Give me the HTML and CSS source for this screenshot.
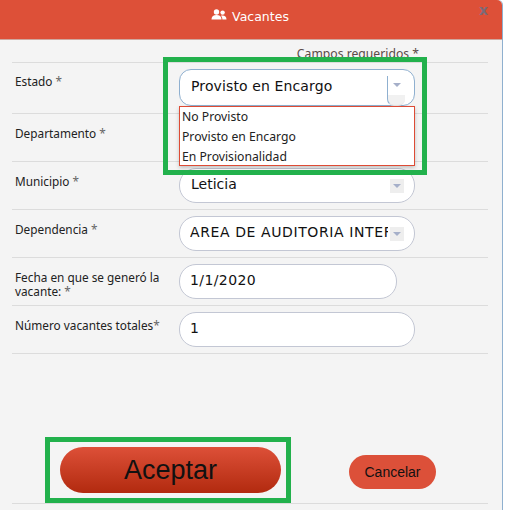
FILE: index.html
```html
<!DOCTYPE html>
<html lang="es">
<head>
<meta charset="utf-8">
<title>Vacantes</title>
<link rel="stylesheet" href="styles.css">
</head>
<body>
<div class="modal">
  <header class="head">
    <svg class="users" viewBox="0 0 16 12" width="16" height="12" aria-hidden="true">
      <circle cx="5.5" cy="3" r="2.7" fill="#fff"/>
      <circle cx="11.6" cy="3.6" r="2.2" fill="#fff"/>
      <path d="M0.5 10.5c0-3 2-4.4 5-4.4s5 1.4 5 4.4z" fill="#fff"/>
      <path d="M11.4 10.5h4.1c0-2.600-1.500-4-4-4-.6 0-1.100.1-1.600.2 1 .9 1.500 2.200 1.500 3.800z" fill="#fff"/>
    </svg>
    <span class="title">Vacantes</span>
    <span class="close">x</span>
  </header>
  <main class="body">
    <p class="req">Campos requeridos *</p>
    <div class="row row-first">
      <label class="lab">Estado <i>*</i></label>
      <div class="field focus"><span class="val val-main">Provisto en Encargo</span><span class="arrow arrow-open"></span></div>
    </div>
    <div class="row">
      <label class="lab">Departamento <i>*</i></label>
      <div class="field"><span class="arrow"></span></div>
    </div>
    <div class="row">
      <label class="lab">Municipio <i>*</i></label>
      <div class="field"><span class="val">Leticia</span><span class="arrow"></span></div>
    </div>
    <div class="row">
      <label class="lab">Dependencia <i>*</i></label>
      <div class="field"><span class="val clip">AREA DE AUDITORIA INTERNA</span><span class="arrow"></span></div>
    </div>
    <div class="row">
      <label class="lab two">Fecha en que se generó la vacante: <i>*</i></label>
      <div class="field short"><span class="val val-in">1/1/2020</span></div>
    </div>
    <div class="row">
      <label class="lab">Número vacantes totales<i>*</i></label>
      <div class="field"><span class="val val-in">1</span></div>
    </div>
    <footer class="foot">
      <button class="btn-ok" type="button">Aceptar</button>
      <button class="btn-cancel" type="button">Cancelar</button>
    </footer>
  </main>
  <ul class="drop">
    <li>No Provisto</li>
    <li>Provisto en Encargo</li>
    <li>En Provisionalidad</li>
  </ul>
  <div class="mark mark-select"></div>
  <div class="mark mark-ok"></div>
</div>
</body>
</html>
```
FILE: styles.css
```css
* { box-sizing: border-box; }
html, body { margin: 0; padding: 0; background: #fff; }
body { width: 505px; height: 510px; overflow: hidden; font-family: "DejaVu Sans", Verdana, sans-serif; }
.modal { position: relative; width: 503px; height: 510px; background: #f4f4f4; border-right: 1px solid #8fb0cf; border-top-right-radius: 5px; }
.head { height: 40px; background: #dd5038; color: #fff; display: flex; align-items: center; justify-content: center; gap: 5px; padding: 0 2px 6px 0; border-bottom: 1px solid #cfa89e; border-top-right-radius: 5px; position: relative; }
.users { margin-top: -4px; }
.title { font-size: 12.5px; line-height: 16px; }
.close { position: absolute; right: 14px; top: 2px; font-size: 14px; font-weight: bold; line-height: 16px; color: #7c6a78; }
.body { padding: 0 14px 0 12px; }
.req { margin: 0; height: 22px; padding: 6px 69px 0 0; text-align: right; font-family: "Noto Sans", sans-serif; font-size: 12.2px; line-height: 16px; color: #5a4a48; }
.row { height: 48px; display: grid; grid-template-columns: 167px 1fr; align-items: start; padding-top: 6px; border-bottom: 1px solid #dcdcdc; }
.row-first { height: 52px; border-top: 1px solid #dcdcdc; padding-top: 6px; }
.lab { font-family: "Noto Sans", sans-serif; font-size: 11.8px; line-height: 14px; color: #222; padding: 6px 0 0 3px; }
.row-first .lab { padding-top: 5px; }
.lab i { font-style: normal; color: #666; }
.row .two { padding-top: 6px; line-height: 14px; }
.field { width: 236px; height: 35px; background: #fff; border: 1px solid #c3c7d4; border-radius: 17px; display: flex; align-items: center; padding: 0 0 3px 11px; position: relative; }
.short { width: 218px; }
.focus { height: 37px; border-color: #8fb0d0; border-radius: 12px; }
.val { font-size: 14px; color: #111; white-space: nowrap; }
.val-main { letter-spacing: .12px; }
.val-in { margin-left: -1px; letter-spacing: .4px; }
.clip { width: 198px; overflow: hidden; margin-left: -1px; letter-spacing: .6px; }
.arrow { position: absolute; right: 10px; top: 10px; width: 14px; height: 14px; background: #eeeeee; }
.arrow::after { content: ""; position: absolute; left: 3px; top: 5px; border: 4px solid transparent; border-top: 4px solid #a5afc9; border-bottom: 0; }
.arrow-open { right: 9px; top: 6px; width: 18px; height: 30px; background: linear-gradient(#fff 0 66%, #f1f1f1 66%); border-left: 1px solid #8fb0d0; border-bottom: 1px solid #e4e4e4; border-radius: 0 0 7px 7px; }
.arrow-open::after { left: 5px; top: 7px; }
.foot { margin-top: 84px; height: 66px; border-bottom: 1px solid #dcdcdc; display: flex; align-items: flex-start; padding: 9px 0 0 48px; }
.btn-ok { width: 221px; height: 46px; border: 0; border-radius: 23px; background: linear-gradient(#dd5038, #b22a0f); font-family: "Liberation Sans", Arial, sans-serif; font-size: 27px; color: #111; padding: 0; }
.btn-cancel { width: 87px; height: 34px; margin: 8px 0 0 68px; border: 0; border-radius: 17px; background: #dc5039; font-family: "Liberation Sans", Arial, sans-serif; font-size: 14px; color: #111; padding: 0; }
.drop { position: absolute; left: 179px; top: 106px; width: 236px; height: 60px; margin: 0; padding: 0 0 0 2px; list-style: none; background: #fff; border: 1px solid #dd4b35; box-shadow: 0 2px 4px rgba(0,0,0,.2); font-family: "Noto Sans", sans-serif; font-size: 12.2px; }
.drop li { height: 20px; line-height: 20px; color: #222; }
.mark { position: absolute; border: 5px solid #22b14c; pointer-events: none; }
.mark-select { left: 163px; top: 57px; width: 264px; height: 118px; }
.mark-ok { left: 45px; top: 437px; width: 246px; height: 66px; }
```
